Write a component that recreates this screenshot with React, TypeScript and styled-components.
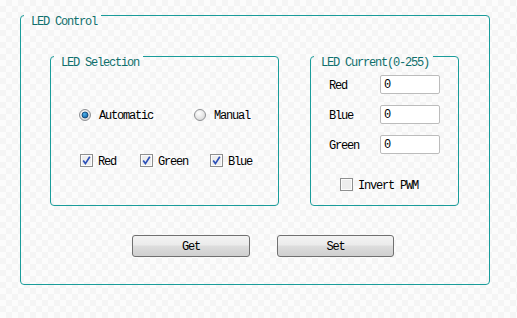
import { useId } from 'react';
import styled, { createGlobalStyle } from 'styled-components';

const GlobalStyle = createGlobalStyle`
	html, body {
		margin: 0;
		padding: 0;
	}
	body {
		font-family: 'Liberation Mono', 'DejaVu Sans Mono', monospace;
		font-size: 12px;
		color: #000;
	}
`;

const RadioMark = ({ checked }: { checked: boolean }) => {
	const id = useId();
	return (
		<svg width='12' height='12' viewBox='0 0 12 12'>
			<defs>
				<radialGradient id={id + 'r'} cx='40%' cy='35%' r='70%'>
					<stop offset='0' stopColor='#ffffff' />
					<stop offset='1' stopColor='#d6d6d6' />
				</radialGradient>
				<radialGradient id={id + 'b'} cx='40%' cy='35%' r='70%'>
					<stop offset='0' stopColor='#4fb4ef' />
					<stop offset='1' stopColor='#0d5c9c' />
				</radialGradient>
			</defs>
			<circle cx='6' cy='6' r='5.5' fill={`url(#${id}r)`} stroke='#8f9194' />
			{checked && <circle cx='6' cy='6' r='3' fill={`url(#${id}b)`} stroke='#0e3f6c' strokeWidth='0.8' />}
		</svg>
	);
};

const CheckMark = ({ checked }: { checked: boolean }) => (
	<svg width='13' height='13' viewBox='0 0 13 13'>
		<rect x='0.5' y='0.5' width='12' height='12' fill='#e4e4e4' stroke='#8e8f8f' />
		<rect x='1.5' y='1.5' width='10' height='10' fill='#ededed' stroke='#fbfbfb' />
		{checked && <path d='M3.2 6.6 L5.4 9.6 L9.8 2.8' fill='none' stroke='#2b4fb8' strokeWidth='1.7' />}
	</svg>
);

export default function App() {
	return (
		<Page>
			<GlobalStyle />
			<GroupBox>
				<Title>LED Control</Title>
				<ControlBody>
					<Panels>
						<GroupBox $width={229}>
							<Title>LED Selection</Title>
							<SelectionBody>
								<OptionRow>
									<RadioItem $width={115}>
										<RadioMark checked />
										<Caption>Automatic</Caption>
									</RadioItem>
									<RadioItem>
										<RadioMark checked={false} />
										<Caption>Manual</Caption>
									</RadioItem>
								</OptionRow>
								<OptionRow>
									<CheckItem $width={60}>
										<CheckMark checked />
										<Caption>Red</Caption>
									</CheckItem>
									<CheckItem $width={70}>
										<CheckMark checked />
										<Caption>Green</Caption>
									</CheckItem>
									<CheckItem>
										<CheckMark checked />
										<Caption>Blue</Caption>
									</CheckItem>
								</OptionRow>
							</SelectionBody>
						</GroupBox>
						<GroupBox $width={149}>
							<Title>LED Current(0-255)</Title>
							<CurrentBody>
								{['Red', 'Blue', 'Green'].map((name) => (
									<FieldRow key={name}>
										<FieldLabel>{name}</FieldLabel>
										<NumberField type='text' defaultValue='0' />
									</FieldRow>
								))}
								<InvertRow>
									<CheckMark checked={false} />
									<Caption>Invert PWM</Caption>
								</InvertRow>
							</CurrentBody>
						</GroupBox>
					</Panels>
					<ButtonRow>
						<PushButton $width={118}>Get</PushButton>
						<PushButton $width={117}>Set</PushButton>
					</ButtonRow>
				</ControlBody>
			</GroupBox>
		</Page>
	);
}

const Page = styled.div`
	width: 517px;
	height: 318px;
	box-sizing: border-box;
	padding: 3px 0 0 20px;
	background-color: #fafafa;
	background-image: repeating-conic-gradient(#f5f5f5 0 25%, #fcfcfc 0 50%);
	background-size: 12px 12px;
	overflow: hidden;
`;

const GroupBox = styled.fieldset<{ $width?: number }>`
	box-sizing: border-box;
	width: ${({ $width }) => ($width ? `${$width}px` : '470px')};
	min-width: 0;
	margin: 0;
	padding: 0;
	border: 1px solid #1a9c9a;
	border-radius: 4px;
`;

const Title = styled.legend`
	margin-left: 3px;
	padding: 14px 4px 0 7px;
	line-height: 10px;
	color: #0e6f6c;
	letter-spacing: -1.2px;
`;

const ControlBody = styled.div`
	padding: 17px 0 27px 29px;
`;

const Panels = styled.div`
	display: flex;
	gap: 31px;
`;

const SelectionBody = styled.div`
	display: flex;
	flex-direction: column;
	gap: 33px;
	padding: 41px 0 38px 28px;
`;

const OptionRow = styled.div`
	display: flex;
	align-items: center;
	letter-spacing: -1.2px;
`;

const Caption = styled.span`
	padding-top: 2px;
	line-height: 10px;
`;

const RadioItem = styled.label<{ $width?: number }>`
	display: flex;
	align-items: center;
	gap: 8px;
	width: ${({ $width }) => ($width ? `${$width}px` : 'auto')};
`;

const CheckItem = styled.label<{ $width?: number }>`
	display: flex;
	align-items: center;
	gap: 5px;
	width: ${({ $width }) => ($width ? `${$width}px` : 'auto')};
	margin-left: 1px;
	margin-right: -1px;
`;

const CurrentBody = styled.div`
	display: flex;
	flex-direction: column;
	gap: 11px;
	padding: 7px 0 13px 18px;
`;

const FieldRow = styled.div`
	display: flex;
	align-items: center;
	height: 19px;
`;

const FieldLabel = styled.span`
	width: 51px;
	padding-top: 3px;
	letter-spacing: -1.2px;
`;

const NumberField = styled.input`
	box-sizing: border-box;
	width: 60px;
	height: 19px;
	margin: 0;
	padding: 0 3px;
	border: 1px solid #bcbcbc;
	border-radius: 2px;
	background: #fff;
	font-family: 'Liberation Mono', monospace;
	font-size: 12px;
	color: #000;
	outline: none;
`;

const InvertRow = styled.label`
	display: flex;
	align-items: center;
	gap: 5px;
	margin: 13px 0 0 11px;
	letter-spacing: -1.2px;
`;

const ButtonRow = styled.div`
	display: flex;
	gap: 27px;
	padding: 29px 0 0 82px;
`;

const PushButton = styled.button<{ $width: number }>`
	box-sizing: border-box;
	width: ${({ $width }) => $width}px;
	height: 22px;
	padding: 2px 0 0;
	border: 1px solid #707070;
	border-radius: 3px;
	background: linear-gradient(#f3f3f3, #ebebeb 45%, #dddddd 50%, #cfcfcf);
	font-family: 'Liberation Mono', monospace;
	font-size: 12px;
	letter-spacing: -1.2px;
	color: #000;
	cursor: pointer;
`;
